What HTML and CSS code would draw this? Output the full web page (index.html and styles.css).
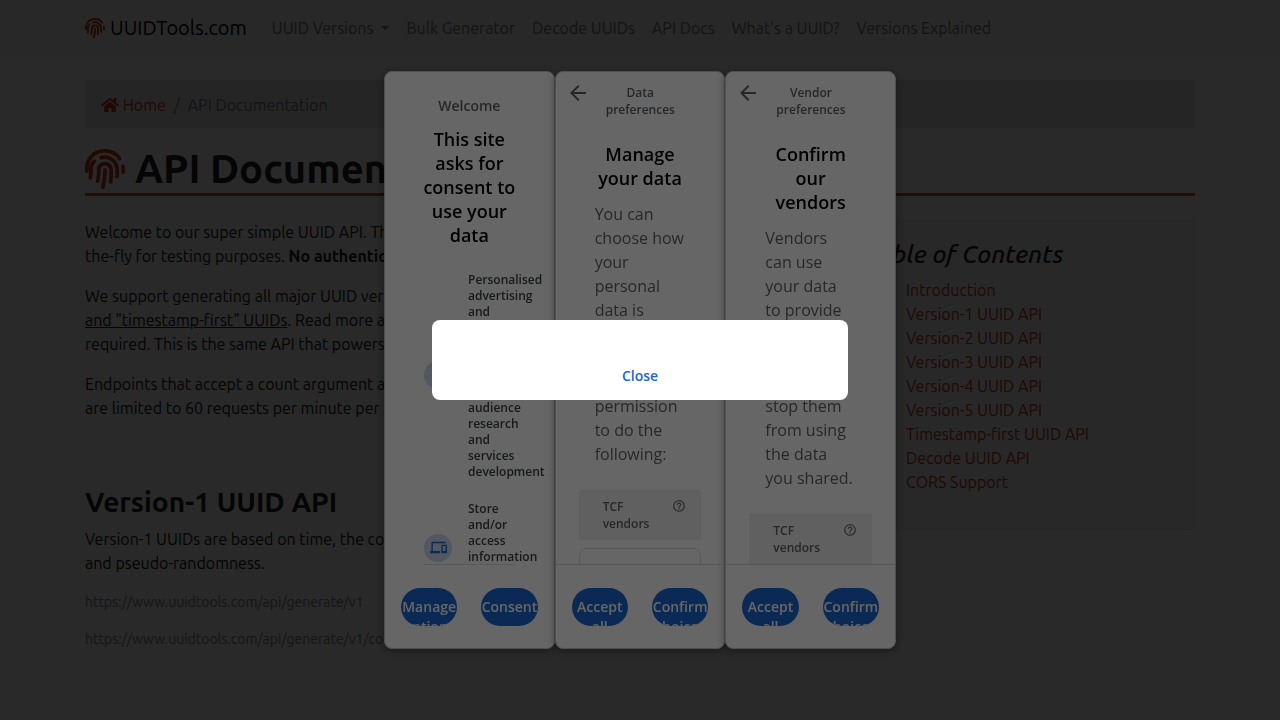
FILE: index.html
```html
<!DOCTYPE html>
<html lang="en">
<head>
<meta charset="utf-8">
<meta name="viewport" content="width=device-width, initial-scale=1">
<title>API Documentation - UUIDTools.com</title>
<link rel="stylesheet" href="styles.css">
</head>
<body>
<svg class="sprite" aria-hidden="true">
  <symbol id="fingerprint" viewBox="0 0 512 512">
    <g fill="none" stroke="currentColor" stroke-width="48" stroke-linecap="round">
      <path d="M256 270C258 350 248 420 228 488"/>
      <path d="M162 413C172 365 177 315 176 265C175 220 210 188 255 188C300 188 336 225 337 268C338 320 335 370 328 420"/>
      <path d="M68 370C76 330 77 300 76 268C74 215 95 180 122 156"/>
      <path d="M206 112C300 84 400 140 412 260C414 300 413 325 411 353"/>
      <path d="M24 282C16 130 110 24 250 24C350 24 410 70 442 122"/>
      <path d="M486 222C488 250 488 270 487 298"/>
    </g>
  </symbol>
  <symbol id="home" viewBox="0 0 576 512">
    <path fill="currentColor" d="M280.37 148.26L96 300.11V464a16 16 0 0 0 16 16l112.06-.29a16 16 0 0 0 15.92-16V368a16 16 0 0 1 16-16h64a16 16 0 0 1 16 16v95.64a16 16 0 0 0 16 16.05L464 480a16 16 0 0 0 16-16V300L295.67 148.26a12.19 12.19 0 0 0-15.3 0zM571.6 251.47L488 182.56V44.05a12 12 0 0 0-12-12h-56a12 12 0 0 0-12 12v72.61L318.47 43a48 48 0 0 0-61 0L4.34 251.47a12 12 0 0 0-1.6 16.9l25.5 31A12 12 0 0 0 45.15 301l235.22-193.74a12.19 12.19 0 0 1 15.3 0L530.9 301a12 12 0 0 0 16.9-1.6l25.5-31a12 12 0 0 0-1.7-16.93z"/>
  </symbol>
  <symbol id="back" viewBox="0 0 24 24">
    <path fill="currentColor" d="M20 11H7.83l5.59-5.59L12 4l-8 8 8 8 1.41-1.41L7.83 13H20v-2z"/>
  </symbol>
  <symbol id="help" viewBox="0 0 24 24">
    <path fill="currentColor" d="M11 18h2v-2h-2v2zm1-16C6.48 2 2 6.48 2 12s4.48 10 10 10 10-4.48 10-10S17.52 2 12 2zm0 18c-4.41 0-8-3.59-8-8s3.59-8 8-8 8 3.59 8 8-3.59 8-8 8zm0-14c-2.21 0-4 1.79-4 4h2c0-1.1.9-2 2-2s2 .9 2 2c0 2-3 1.75-3 5h2c0-2.25 3-2.5 3-5 0-2.21-1.79-4-4-4z"/>
  </symbol>
  <symbol id="devices" viewBox="0 0 24 24">
    <path fill="currentColor" d="M4 6h18V4H4c-1.100 0-2 .9-2 2v11H0v3h14v-3H4V6zm19 2h-6c-.55 0-1 .45-1 1v10c0 .55.45 1 1 1h6c.55 0 1-.45 1-1V9c0-.55-.45-1-1-1zm-1 9h-4v-7h4v7z"/>
  </symbol>
  <symbol id="person" viewBox="0 0 24 24">
    <path fill="currentColor" d="M12 4a4 4 0 1 1 0 8 4 4 0 0 1 0-8zm0 10c4.400 0 8 1.800 8 4v2H4v-2c0-2.200 3.600-4 8-4z"/>
  </symbol>
</svg>

<div class="page">
  <nav class="navbar">
    <div class="container nav-row">
      <a class="brand" href="#"><svg class="brand-icon" aria-hidden="true"><use href="#fingerprint"/></svg>UUIDTools.com</a>
      <a class="nav-link dropdown" href="#">UUID Versions</a>
      <a class="nav-link" href="#">Bulk Generator</a>
      <a class="nav-link" href="#">Decode UUIDs</a>
      <a class="nav-link" href="#">API Docs</a>
      <a class="nav-link" href="#">What's a UUID?</a>
      <a class="nav-link" href="#">Versions Explained</a>
    </div>
  </nav>
  <main class="container">
    <div class="breadcrumb">
      <a class="link" href="#"><svg class="home-icon" aria-hidden="true"><use href="#home"/></svg> Home</a>
      <span class="crumb-separator">/</span>
      <span class="crumb-current">API Documentation</span>
    </div>
    <h1 class="page-title"><svg class="title-icon" aria-hidden="true"><use href="#fingerprint"/></svg>API Documentation</h1>
    <div class="columns">
      <div class="article">
        <p>Welcome to our super simple UUID API. This API lets you generate UUIDs on-<br>the-fly for testing purposes. <strong>No authentication is required.</strong></p>
        <p>We support generating all major UUID versions, as well as nil UUIDs<br><a class="text-link" href="#">and "timestamp-first" UUIDs</a>. Read more about our API below, no sign-up<br>required. This is the same API that powers the UUIDTools.com site.</p>
        <p>Endpoints that accept a count argument allow up to 100 UUIDs, and<br>are limited to 60 requests per minute per IP address.</p>
        <h2 class="section-title">Version-1 UUID API</h2>
        <p>Version-1 UUIDs are based on time, the computer's MAC address,<br>and pseudo-randomness.</p>
        <div class="endpoints">
          <p class="endpoint">https://www.uuidtools.com/api/generate/v1</p>
          <p class="endpoint">https://www.uuidtools.com/api/generate/v1/count/10</p>
        </div>
      </div>
      <aside class="toc">
        <h4 class="toc-title">Table of Contents</h4>
        <ul class="toc-list">
          <li><a class="link" href="#">Introduction</a></li>
          <li><a class="link" href="#">Version-1 UUID API</a></li>
          <li><a class="link" href="#">Version-2 UUID API</a></li>
          <li><a class="link" href="#">Version-3 UUID API</a></li>
          <li><a class="link" href="#">Version-4 UUID API</a></li>
          <li><a class="link" href="#">Version-5 UUID API</a></li>
          <li><a class="link" href="#">Timestamp-first UUID API</a></li>
          <li><a class="link" href="#">Decode UUID API</a></li>
          <li><a class="link" href="#">CORS Support</a></li>
        </ul>
      </aside>
    </div>
  </main>
</div>

<div class="overlay">
  <div class="dialogs">
    <section class="dialog">
      <div class="dialog-body welcome-body">
        <div class="welcome">Welcome</div>
        <h2 class="dialog-title">This site asks for consent to use your data</h2>
        <ul class="purposes">
          <li class="purpose">
            <span class="purpose-icon"><svg aria-hidden="true"><use href="#person"/></svg></span>
            <span class="purpose-text">Personalised advertising and content, advertising and content measurement, audience research and services development</span>
          </li>
          <li class="purpose">
            <span class="purpose-icon"><svg aria-hidden="true"><use href="#devices"/></svg></span>
            <span class="purpose-text">Store and/or access information on a device</span>
          </li>
        </ul>
      </div>
      <div class="dialog-footer inset-line">
        <button class="pill" type="button">Manage options</button>
        <button class="pill" type="button">Consent</button>
      </div>
    </section>
    <section class="dialog">
      <header class="dialog-header">
        <button class="back" type="button" aria-label="Back"><svg aria-hidden="true"><use href="#back"/></svg></button>
        <div class="dialog-label">Data preferences</div>
      </header>
      <div class="dialog-body">
        <h2 class="dialog-title">Manage your data</h2>
        <p class="dialog-text">You can choose how your personal data is used. You can give vendors permission to do the following:</p>
        <div class="vendor-bar"><span>TCF vendors</span><svg class="help-icon" aria-hidden="true"><use href="#help"/></svg></div>
        <div class="vendor-card"></div>
      </div>
      <div class="dialog-footer">
        <button class="pill" type="button">Accept all</button>
        <button class="pill" type="button">Confirm choices</button>
      </div>
    </section>
    <section class="dialog">
      <header class="dialog-header">
        <button class="back" type="button" aria-label="Back"><svg aria-hidden="true"><use href="#back"/></svg></button>
        <div class="dialog-label">Vendor preferences</div>
      </header>
      <div class="dialog-body">
        <h2 class="dialog-title">Confirm our vendors</h2>
        <p class="dialog-text">Vendors can use your data to provide services. You can choose to stop them from using the data you shared.</p>
        <div class="vendor-bar"><span>TCF vendors</span><svg class="help-icon" aria-hidden="true"><use href="#help"/></svg></div>
        <div class="vendor-card"></div>
      </div>
      <div class="dialog-footer">
        <button class="pill" type="button">Accept all</button>
        <button class="pill" type="button">Confirm choices</button>
      </div>
    </section>
  </div>
</div>

<div class="overlay">
  <div class="alert" role="alertdialog" aria-label="Message">
    <button class="close" type="button">Close</button>
  </div>
</div>
</body>
</html>
```
FILE: styles.css
```css
* { box-sizing: border-box; }
html, body { height: 100%; }
body {
  margin: 0;
  overflow: hidden;
  background: #fff;
  color: #212121;
  font: 16px/24px Ubuntu, "Noto Sans", sans-serif;
}
h1, h2, h4, p, ul { margin: 0; padding: 0; }
a { text-decoration: none; }
button { border: 0; margin: 0; padding: 0; background: none; font: inherit; cursor: pointer; }
.sprite { position: absolute; width: 0; height: 0; }

.container { max-width: 1140px; margin: 0 auto; padding: 0 15px; }
.navbar { background: #f9f9f9; margin-bottom: 24px; }
.nav-row { display: flex; align-items: center; height: 56px; gap: 17px; white-space: nowrap; }
.brand { display: flex; align-items: center; gap: 5px; margin-right: 8px; font-size: 20px; color: #000; }
.brand-icon { width: 20px; height: 20px; color: #c83c14; }
.nav-link { color: #7c7c7c; }
.dropdown { display: flex; align-items: center; gap: 8px; }
.dropdown::after { content: ""; border: 4px solid transparent; border-top-color: currentColor; border-bottom: 0; }

.breadcrumb {
  display: flex;
  gap: 8px;
  padding: 13px 16px 11px;
  margin-bottom: 16px;
  background: #ececec;
  border-radius: 4px;
}
.link { color: #c83c1c; }
.home-icon { width: 18px; height: 16px; vertical-align: -2px; }
.crumb-separator, .crumb-current { color: #787878; }
.page-title {
  display: flex;
  align-items: center;
  gap: 10px;
  padding-top: 1px;
  margin-bottom: 24px;
  border-bottom: 3px solid #e0500c;
  font-size: 40px;
  line-height: 48px;
  font-weight: 700;
}
.title-icon { width: 40px; height: 40px; color: #c83c14; }

.columns { display: grid; grid-template-columns: minmax(0, 1fr) 350px; gap: 30px; align-items: start; }
.article { white-space: nowrap; min-width: 0; }
.article p { margin-bottom: 16px; }
.text-link { color: inherit; text-decoration: underline; }
.section-title { margin: 65px 0 8px; font-size: 28px; line-height: 34px; font-weight: 700; }
.endpoints { padding-top: 1px; }
.endpoint { color: #8a8a8a; font-size: 14px; line-height: 21px; }
.toc { padding: 19px 20px; background: #f9f9f9; border: 1px solid #eee; border-radius: 4px; min-height: 310px; }
.toc-title { margin-bottom: 9px; font-size: 25px; line-height: 29px; font-weight: 500; font-style: italic; }
.toc-list { padding-left: 40px; list-style: none; }

.overlay {
  position: fixed;
  inset: 0;
  display: flex;
  align-items: center;
  justify-content: center;
  background: rgba(0, 0, 0, .6);
  font-family: "Open Sans", "Noto Sans", sans-serif;
}
.dialogs { display: grid; grid-template-columns: repeat(3, minmax(0, 1fr)); width: 40vw; height: calc(80vh + 2px); }
.dialog {
  display: flex;
  flex-direction: column;
  min-height: 0;
  overflow: hidden;
  background: #fff;
  border: 1px solid #c8c8c8;
  border-radius: 8px;
  box-shadow: 0 2px 8px rgba(0, 0, 0, .4);
}
.dialog-body { flex: 1; min-height: 0; overflow: hidden; }
.welcome-body { padding-top: 23px; }
.welcome { margin-bottom: 10px; text-align: center; font-size: 14px; line-height: 22px; font-weight: 600; color: #5f6368; }
.dialog-title { padding: 0 36px; text-align: center; font-size: 18px; line-height: 24px; font-weight: 600; color: #000; }
.purposes { padding: 25px 39px 0; list-style: none; }
.purpose { display: flex; align-items: center; gap: 16px; margin-bottom: 21px; }
.purpose-icon {
  display: flex;
  flex: none;
  align-items: center;
  justify-content: center;
  width: 28px;
  height: 28px;
  margin-bottom: 3px;
  border-radius: 50%;
  background: #ccd9f0;
  color: #1967d2;
}
.purpose-icon svg { width: 17px; height: 17px; }
.purpose-text { width: 46px; font-size: 12px; line-height: 16px; font-weight: 600; color: #3c4043; }

.dialog-header { display: grid; grid-template-columns: 24px 1fr 24px; gap: 16px; padding: 12px 10px 0; height: 70px; }
.back { display: flex; align-items: center; width: 24px; height: 18px; color: #5f6368; }
.back svg { flex: none; width: 24px; height: 24px; }
.dialog-label { text-align: center; font-size: 12px; line-height: 17px; font-weight: 600; color: #5f6368; }
.dialog-text { padding: 0 39px; margin-top: 12px; font-size: 16px; line-height: 24px; color: #5f6368; }
.vendor-bar {
  display: flex;
  justify-content: space-between;
  margin: 24px 23px 8px;
  padding: 8px 15px 8px 24px;
  background: #efefef;
  color: #5f6368;
  font-size: 12px;
  line-height: 17px;
  font-weight: 600;
}
.vendor-bar span { width: 50px; }
.help-icon { width: 14px; height: 14px; margin-top: 1px; }
.vendor-card { height: 60px; margin: 0 23px; border: 1px solid #dadce0; border-radius: 8px; }

.dialog-footer {
  position: relative;
  display: grid;
  grid-template-columns: minmax(0, 1fr) minmax(0, 1fr);
  gap: 24px;
  padding: 23px 16px 22px;
  border-top: 1px solid #dadce0;
}
.inset-line { border-color: transparent; }
.inset-line::before { content: ""; position: absolute; top: -1px; left: 39px; right: 39px; height: 1px; background: #dadce0; }
.pill {
  display: flex;
  align-items: flex-start;
  justify-content: center;
  height: 38px;
  padding-top: 9px;
  overflow: hidden;
  border-radius: 19px;
  background: #1967d2;
  color: #fff;
  font-size: 14px;
  line-height: 20px;
  font-weight: 600;
}

.alert {
  display: flex;
  justify-content: center;
  width: 416px;
  padding: 44px 24px 12px;
  background: #fff;
  border-radius: 8px;
}
.close { color: #1967d2; font-size: 14px; line-height: 24px; font-weight: 600; }
```
